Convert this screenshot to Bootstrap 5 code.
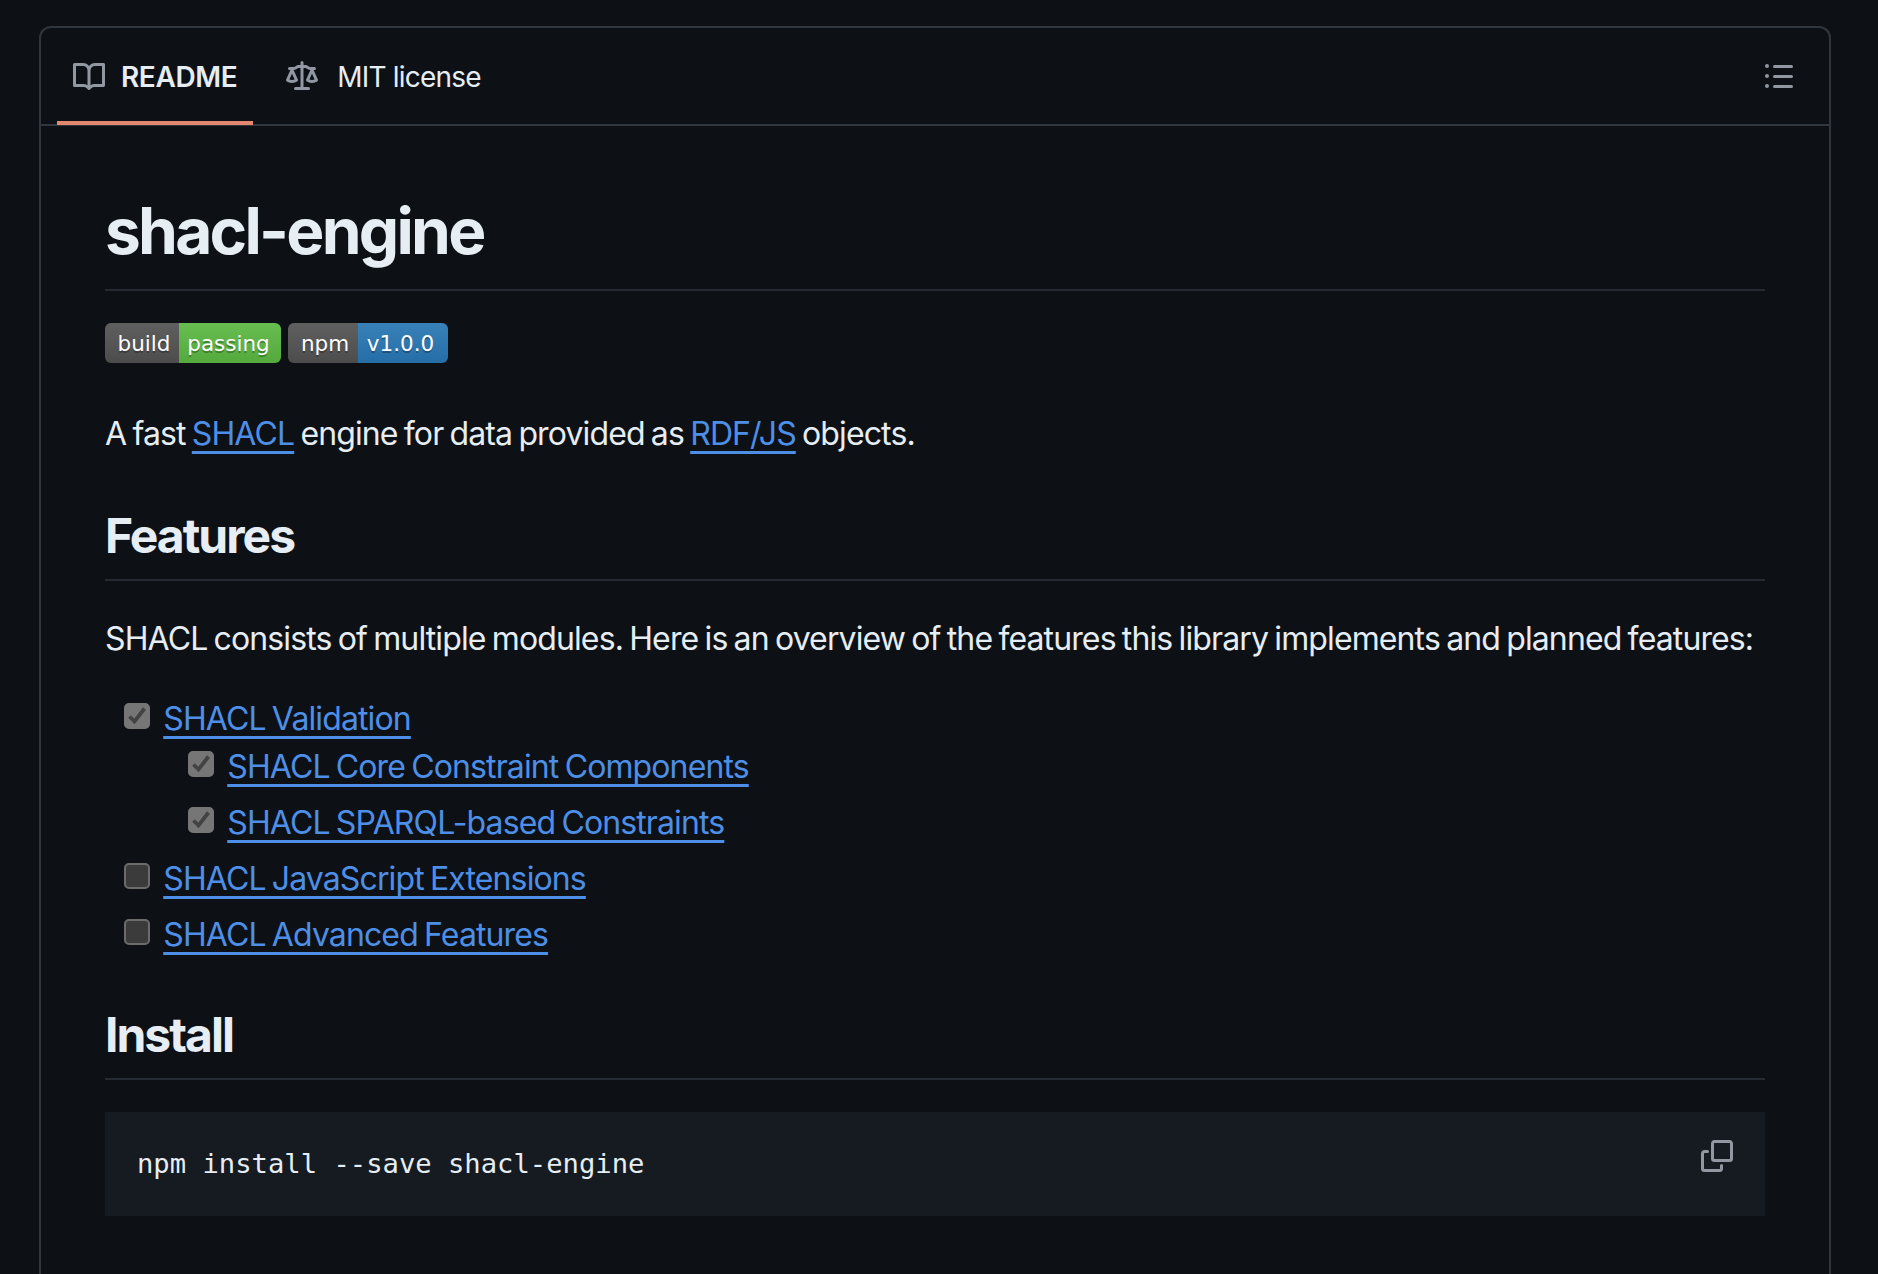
<!DOCTYPE html>
<html lang="en" data-bs-theme="dark">
<head>
<meta charset="utf-8">
<title>shacl-engine</title>
<link rel="stylesheet" href="https://cdn.jsdelivr.net/npm/bootstrap@5.3.0/dist/css/bootstrap.min.css">
<style>
html,body{height:1274px;overflow:hidden;background:#0d1116}
body{font-family:Inter,"Liberation Sans",sans-serif;color:#e6edf3;font-size:32px;line-height:48px;letter-spacing:-.88px;word-spacing:-1.9px}
.readme-box{margin:26px 47px 0 39px;border:2px solid #30363d;border-bottom:0;border-radius:12px 12px 0 0;height:1300px}
.tab-bar{height:97.5px;border-bottom:2px solid #30363d;padding:0 34px 0 16px}
.tab-item{height:96px;padding:4px 16px 0;gap:16px;font-size:28px;color:#e6edf3;margin-bottom:-2px;border-bottom:4px solid transparent;letter-spacing:-.78px;word-spacing:0}
.tab-item.is-on{font-weight:600;border-bottom-color:#e5866f;letter-spacing:-.4px}
.tab-item+.tab-item{margin-left:17px;gap:19px}
.tab-label{padding-top:1px}
.oct{fill:#9198a1;width:32px;height:32px;flex:none;display:block}
.doc{padding:65px 64px 64px}
.doc h1,.doc h2{font-weight:700;color:#e6edf3;border-bottom:2px solid #262b33}
.doc h1{font-size:64px;line-height:80px;padding-bottom:18px;margin:0 0 32px;letter-spacing:-2.75px;word-spacing:0}
.doc h2{font-size:48px;line-height:60px;padding-bottom:13.4px;margin:48px 0 32px;letter-spacing:-2px;word-spacing:0}
.doc p{padding-top:2px;margin:0 0 30px}
.doc a{color:#4d8fe6;text-decoration:underline;text-decoration-thickness:3px;text-underline-offset:6px;text-decoration-skip-ink:none}
.shield-row{gap:7px;height:53px;align-items:flex-start;margin-bottom:32px}
.shield{height:40px;border-radius:6px;overflow:hidden;font-family:"DejaVu Sans",sans-serif;font-size:21.5px;line-height:41px;letter-spacing:0;word-spacing:0;color:#fff;text-shadow:0 2px 0 rgba(1,1,1,.3)}
.shield span{display:block;height:40px;text-align:center;background-image:linear-gradient(rgba(187,187,187,.1),rgba(0,0,0,.1))}
.lab-a{width:74px;background-color:#555;padding-left:4px}
.val-a{width:102px;background-color:#5ebd44;padding-right:3px}
.lab-b{width:70px;background-color:#555;padding-left:4px}
.val-b{width:90px;background-color:#2a7ab9;padding-right:5px}
.task-list{list-style:none;padding:0 0 0 64px;margin:0 0 32px}
.task-list .task-list{margin:-2px 0 0}
.task-list li{padding-top:2px;margin-bottom:-2px}
.task-list li+li{margin-top:8px}
.tick{display:inline-block;width:26px;height:26px;margin:0 6.8px 10px -44.8px;vertical-align:middle;border-radius:5px;background:#3b3b3b;border:2px solid #6b6b6b}
.tick.done{background:#767676;border-color:#767676}
.tick svg{display:block;width:22px;height:22px}
.code-wrap{background:#161b21;padding:32px;font-family:"DejaVu Sans Mono",monospace;font-size:27.2px;line-height:39.44px;height:104px;letter-spacing:0;word-spacing:0}
.code-text{color:#e6edf3;white-space:pre}
.copy-btn{margin-top:-4px}
</style>
</head>
<body>
<div class="readme-box">
  <div class="tab-bar d-flex align-items-center justify-content-between">
    <nav class="d-flex">
      <div class="tab-item is-on d-flex align-items-center">
        <svg class="oct" viewBox="0 0 16 16"><path d="M0 1.75A.75.75 0 0 1 .75 1h4.253c1.227 0 2.317.59 3 1.501A3.743 3.743 0 0 1 11.006 1h4.245a.75.75 0 0 1 .75.75v10.5a.75.75 0 0 1-.75.75h-4.507a2.25 2.25 0 0 0-1.591.659l-.622.621a.75.75 0 0 1-1.06 0l-.622-.621A2.25 2.25 0 0 0 5.258 13H.75a.75.75 0 0 1-.75-.75Zm7.251 10.324.004-5.073-.002-2.253A2.25 2.25 0 0 0 5.003 2.5H1.5v9h3.757a3.75 3.75 0 0 1 1.994.574ZM8.755 4.75l-.004 7.322a3.752 3.752 0 0 1 1.992-.572H14.5v-9h-3.495a2.25 2.25 0 0 0-2.25 2.25Z"/></svg>
        <span class="tab-label">README</span>
      </div>
      <div class="tab-item d-flex align-items-center">
        <svg class="oct" viewBox="0 0 16 16"><path d="M8.75.75V2h.985c.304 0 .603.08.867.231l1.29.736c.038.022.08.033.124.033h2.234a.75.75 0 0 1 0 1.5h-.427l2.111 4.692a.75.75 0 0 1-.154.838l-.53-.53.529.531-.001.002-.002.002-.006.006-.006.005-.01.01-.045.04c-.21.176-.441.327-.686.45C14.556 10.78 13.88 11 13 11a4.498 4.498 0 0 1-2.023-.454 3.544 3.544 0 0 1-.686-.45l-.045-.04-.016-.015-.006-.006-.004-.004v-.001a.75.75 0 0 1-.154-.838L12.178 4.5h-.162c-.305 0-.604-.079-.868-.231l-1.29-.736a.245.245 0 0 0-.124-.033H8.75V13h2.5a.75.75 0 0 1 0 1.5h-6.5a.75.75 0 0 1 0-1.5h2.5V3.5h-.984a.245.245 0 0 0-.124.033l-1.289.737c-.265.15-.564.23-.869.23h-.162l2.112 4.692a.75.75 0 0 1-.154.838l-.53-.53.529.531-.001.002-.002.002-.006.006-.016.015-.045.04c-.21.176-.441.327-.686.45C4.556 10.78 3.88 11 3 11a4.498 4.498 0 0 1-2.023-.454 3.544 3.544 0 0 1-.686-.45l-.045-.04-.016-.015-.006-.006-.004-.004v-.001a.75.75 0 0 1-.154-.838L2.178 4.5H1.75a.75.75 0 0 1 0-1.5h2.234a.249.249 0 0 0 .125-.033l1.288-.737c.265-.15.564-.23.869-.23h.984V.75a.75.75 0 0 1 1.5 0Zm2.945 8.477c.285.135.718.273 1.305.273s1.02-.138 1.305-.273L13 6.327Zm-10 0c.285.135.718.273 1.305.273s1.02-.138 1.305-.273L3 6.327Z"/></svg>
        <span class="tab-label">MIT license</span>
      </div>
    </nav>
    <svg class="oct" viewBox="0 0 16 16"><path d="M5.75 2.5h8.5a.75.75 0 0 1 0 1.5h-8.5a.75.75 0 0 1 0-1.5Zm0 5h8.5a.75.75 0 0 1 0 1.5h-8.5a.75.75 0 0 1 0-1.5Zm0 5h8.5a.75.75 0 0 1 0 1.5h-8.5a.75.75 0 0 1 0-1.5ZM2 14a1 1 0 1 1 0-2 1 1 0 0 1 0 2Zm1-6a1 1 0 1 1-2 0 1 1 0 0 1 2 0ZM2 4a1 1 0 1 1 0-2 1 1 0 0 1 0 2Z"/></svg>
  </div>
  <article class="doc">
    <h1>shacl-engine</h1>
    <div class="shield-row d-flex">
      <div class="shield d-flex"><span class="lab-a">build</span><span class="val-a">passing</span></div>
      <div class="shield d-flex"><span class="lab-b">npm</span><span class="val-b">v1.0.0</span></div>
    </div>
    <p>A fast <a href="#">SHACL</a> engine for data provided as <a href="#">RDF/JS</a> objects.</p>
    <h2>Features</h2>
    <p>SHACL consists of multiple modules. Here is an overview of the features this library implements and planned features:</p>
    <ul class="task-list">
      <li><span class="tick done"><svg viewBox="0 0 22 22"><path d="M3.5 11.5 8.5 16.5 18.5 3.5" fill="none" stroke="#434343" stroke-width="3.8"/></svg></span> <a href="#">SHACL Validation</a>
        <ul class="task-list">
          <li><span class="tick done"><svg viewBox="0 0 22 22"><path d="M3.5 11.5 8.5 16.5 18.5 3.5" fill="none" stroke="#434343" stroke-width="3.8"/></svg></span> <a href="#">SHACL Core Constraint Components</a></li>
          <li><span class="tick done"><svg viewBox="0 0 22 22"><path d="M3.5 11.5 8.5 16.5 18.5 3.5" fill="none" stroke="#434343" stroke-width="3.8"/></svg></span> <a href="#">SHACL SPARQL-based Constraints</a></li>
        </ul>
      </li>
      <li><span class="tick"></span> <a href="#">SHACL JavaScript Extensions</a></li>
      <li><span class="tick"></span> <a href="#">SHACL Advanced Features</a></li>
    </ul>
    <h2>Install</h2>
    <div class="code-wrap d-flex justify-content-between align-items-start">
      <span class="code-text">npm install --save shacl-engine</span>
      <svg class="oct copy-btn" viewBox="0 0 16 16"><path d="M0 6.75C0 5.784.784 5 1.75 5h1.5a.75.75 0 0 1 0 1.5h-1.5a.25.25 0 0 0-.25.25v7.5c0 .138.112.25.25.25h7.5a.25.25 0 0 0 .25-.25v-1.5a.75.75 0 0 1 1.5 0v1.5A1.75 1.75 0 0 1 9.25 16h-7.5A1.75 1.75 0 0 1 0 14.25Z"/><path d="M5 1.75C5 .784 5.784 0 6.75 0h7.5C15.216 0 16 .784 16 1.75v7.5A1.75 1.75 0 0 1 14.25 11h-7.5A1.75 1.75 0 0 1 5 9.25Zm1.75-.25a.25.25 0 0 0-.25.25v7.5c0 .138.112.25.25.25h7.5a.25.25 0 0 0 .25-.25v-7.5a.25.25 0 0 0-.25-.25Z"/></svg>
    </div>
  </article>
</div>
<script src="https://cdn.jsdelivr.net/npm/bootstrap@5.3.0/dist/js/bootstrap.bundle.min.js"></script>
</body>
</html>
